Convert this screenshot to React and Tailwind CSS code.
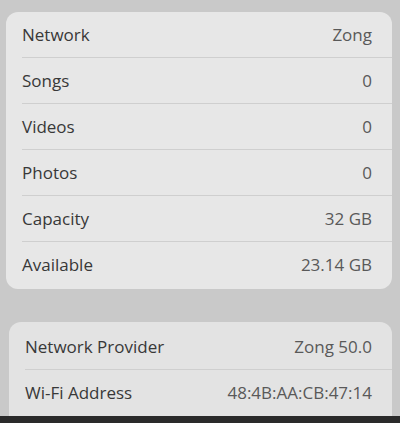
import React from 'react';

const mainRows = [
  { label: 'Network', value: 'Zong' },
  { label: 'Songs', value: '0' },
  { label: 'Videos', value: '0' },
  { label: 'Photos', value: '0' },
  { label: 'Capacity', value: '32 GB' },
  { label: 'Available', value: '23.14 GB' },
];

const netRows = [
  { label: 'Network Provider', value: 'Zong 50.0' },
  { label: 'Wi-Fi Address', value: '48:4B:AA:CB:47:14' },
];

const Row = ({ label, value, last }) => (
  <div className="pl-[16px]">
    <div
      className={`flex items-center justify-between h-[46px] pr-[20px] ${
        last ? '' : 'border-b border-[#cfcfcf]'
      }`}
    >
      <span className="text-[#383838]">{label}</span>
      <span className="text-[#595959]">{value}</span>
    </div>
  </div>
);

export default function App() {
  return (
    <div
      className="w-[400px] h-[423px] overflow-hidden bg-[#c9c9c9] flex flex-col text-[17px]"
      style={{ fontFamily: '"Open Sans", "Noto Sans", sans-serif' }}
    >
      <div className="pt-[12px] pl-[6px] pr-[8px]">
        <div className="bg-[#e7e7e7] rounded-[12px] pb-[1px]">
          {mainRows.map((r, i) => (
            <Row key={r.label} {...r} last={i === mainRows.length - 1} />
          ))}
        </div>
      </div>
      <div className="pt-[33px] pl-[9px] pr-[8px]">
        <div className="bg-[#e3e3e3] rounded-t-[12px] pt-[2px]">
          {netRows.map((r, i) => (
            <Row key={r.label} {...r} last={i === netRows.length - 1} />
          ))}
        </div>
      </div>
      <div className="h-[13px] bg-[#2a2a2a]" />
    </div>
  );
}
